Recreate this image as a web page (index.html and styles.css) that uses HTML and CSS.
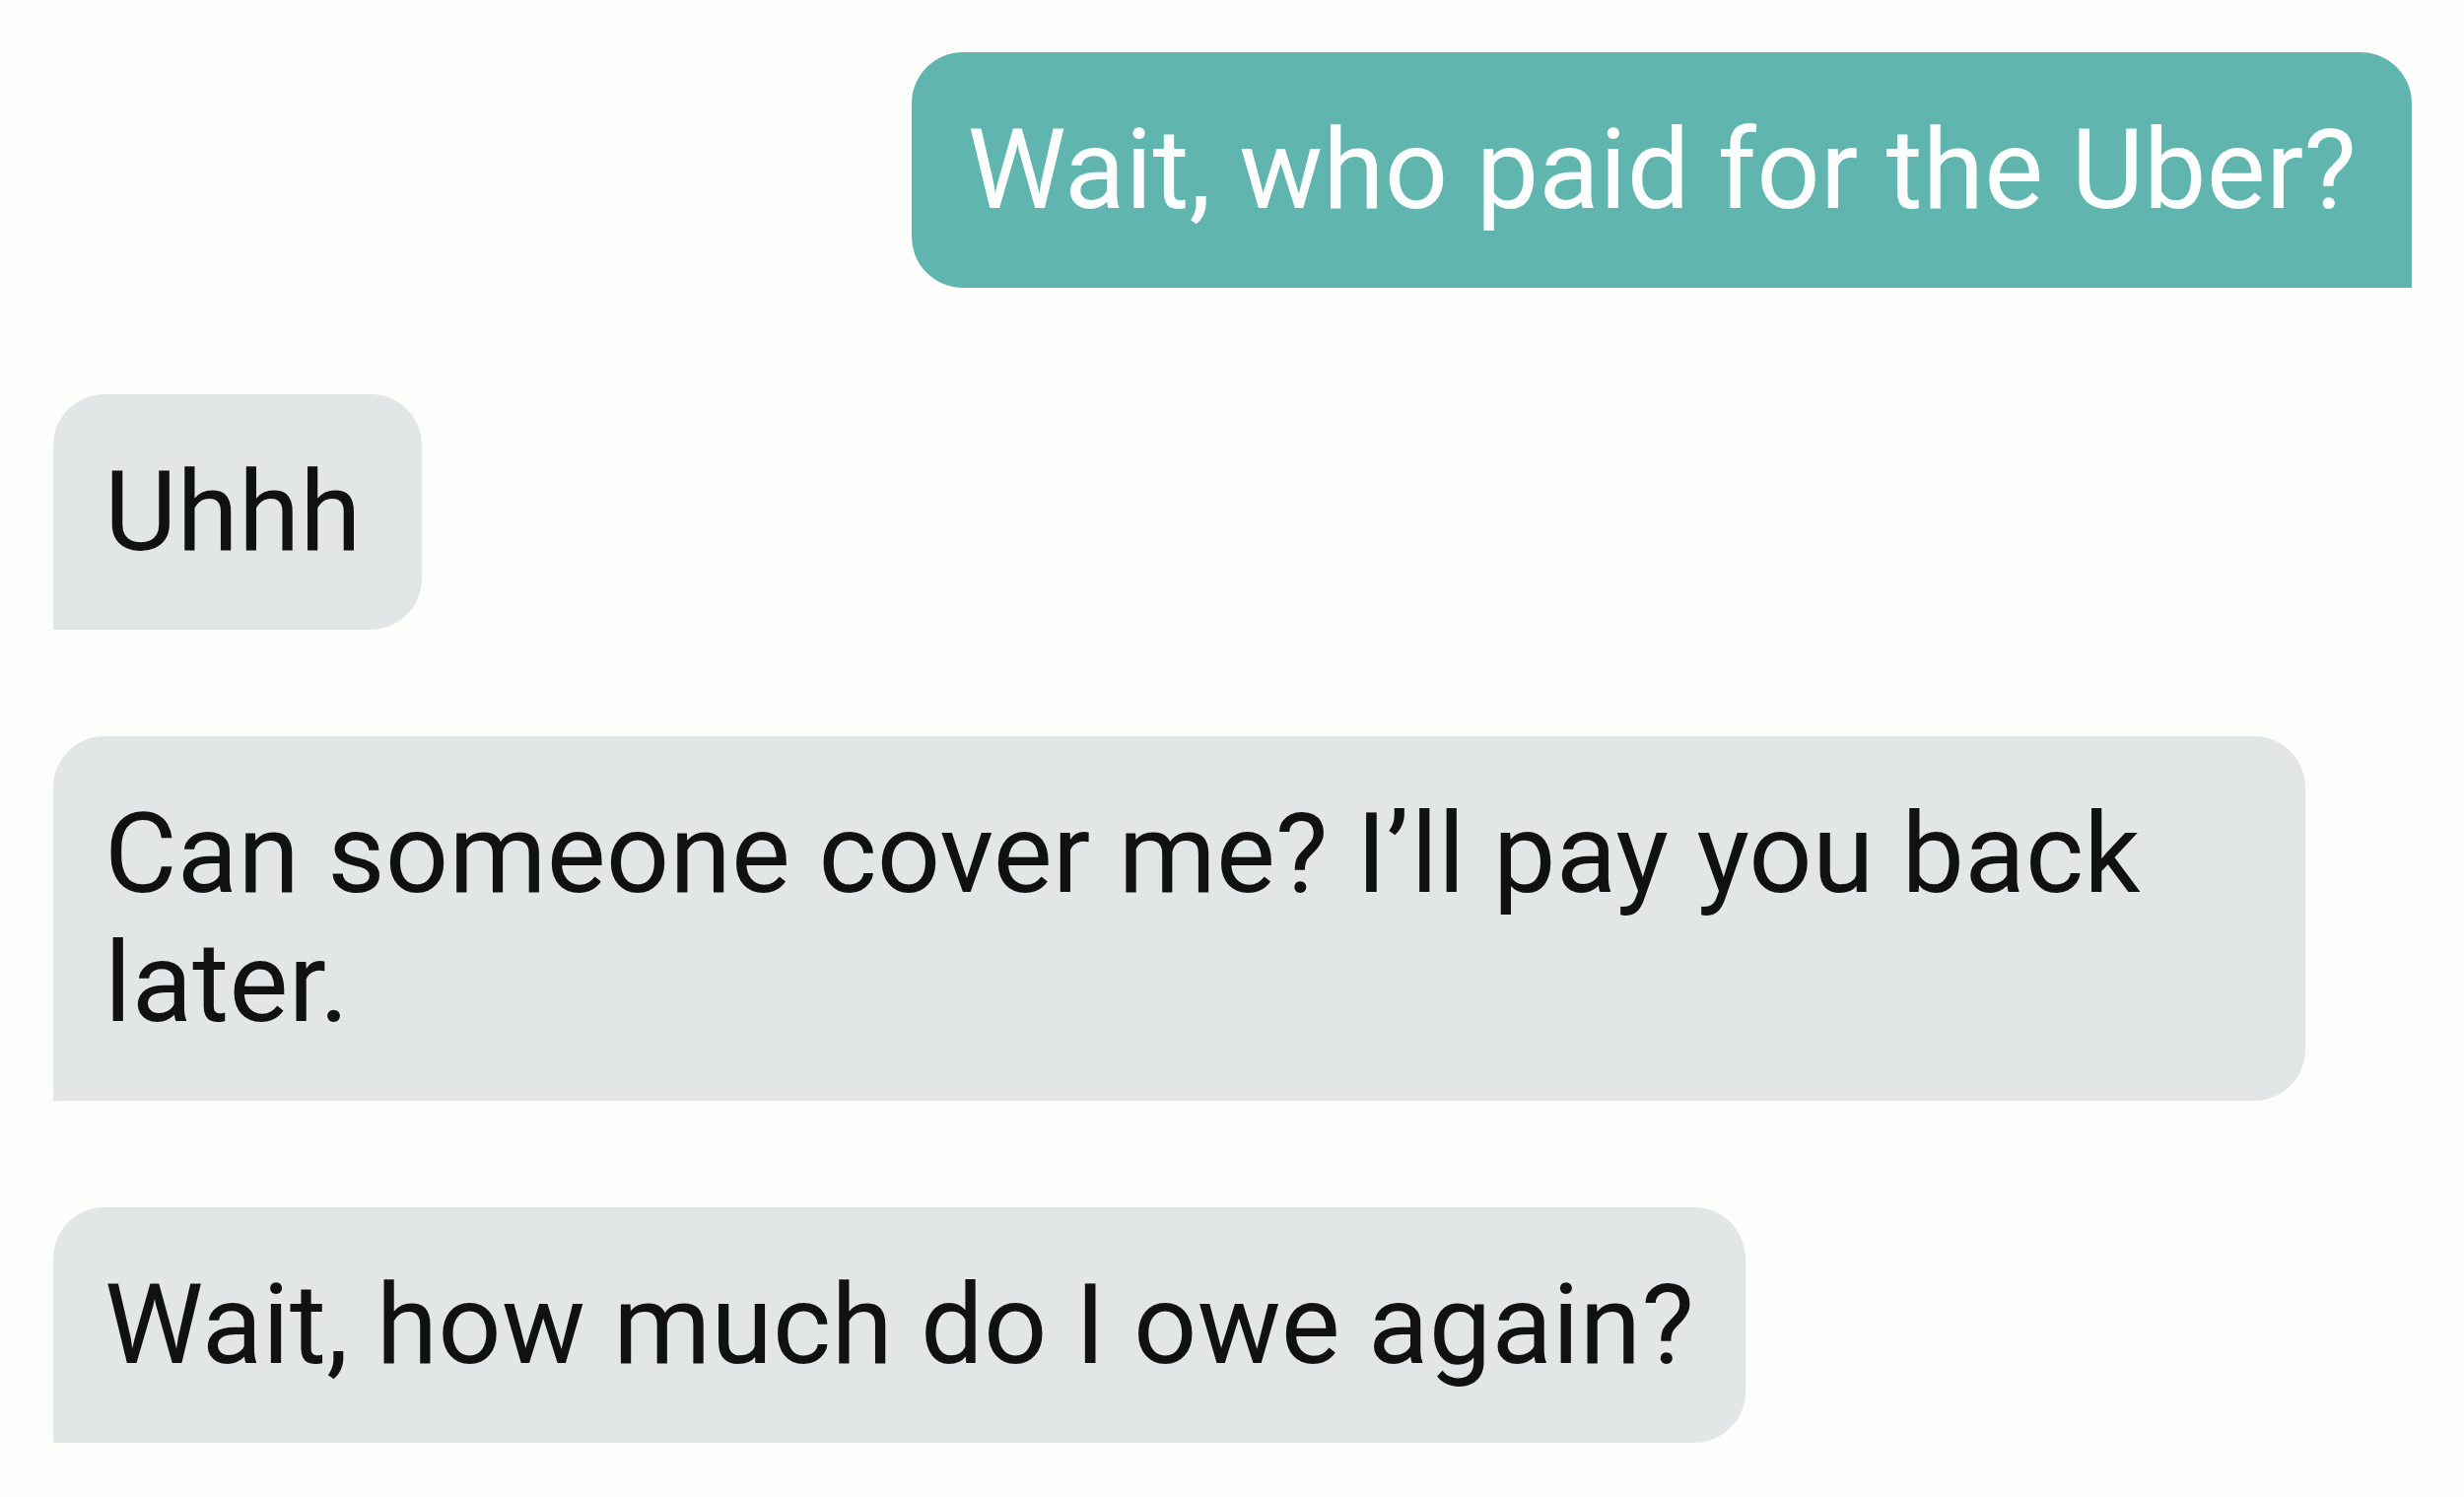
FILE: index.html
```html
<!DOCTYPE html>
<html lang="en">
<head>
    <meta charset="UTF-8">
    <meta name="viewport" content="width=device-width, initial-scale=1.0">
    <title>Group Chat</title>
    <link rel="stylesheet" href="styles.css">
</head>
<body>
    <div class="chat">
        <!-- Outgoing message -->
        <div class="message sent">Wait, who paid for the Uber?</div>

        <!-- Incoming messages -->
        <div class="message received">Uhhh</div>
        <div class="message received">Can someone cover me? I’ll pay you back later.</div>
        <div class="message received">Wait, how much do I owe again?</div>
    </div>
</body>
</html>
```

FILE: styles.css
```css
body {
    margin: 0;
    padding: 0;
    font-family: Roboto, "Noto Sans", Arial, sans-serif;
    background: #fdfdfb;
}

.chat {
    display: flex;
    flex-direction: column;
    gap: 108px;
    padding: 53px 53px 56px 54px;
}

.message {
    max-width: 2285px;
    min-width: 374px;
    box-sizing: border-box;
    padding: 54px 52px;
    font-size: 113px;
    letter-spacing: 0.2px;
    line-height: 131px;
    border-radius: 52px;
}

.sent {
    align-self: flex-end;
    background: #60b5af;
    color: #fbfefd;
    border-bottom-right-radius: 0;
    padding-left: 56px;
    padding-right: 56px;
}

.received {
    align-self: flex-start;
    background: #e2e6e7;
    color: #111;
    border-bottom-left-radius: 0;
}
```
